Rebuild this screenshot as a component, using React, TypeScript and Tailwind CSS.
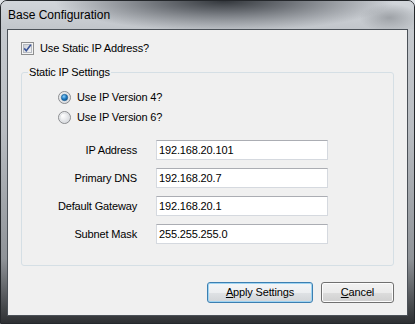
import React from "react";

function CheckBox() {
  return (
    <svg width="13" height="13" viewBox="0 0 13 13" className="shrink-0">
      <defs>
        <linearGradient id="cbg" x1="0" y1="0" x2="1" y2="1">
          <stop offset="0" stopColor="#cbcfd5" />
          <stop offset="1" stopColor="#f7f7f7" />
        </linearGradient>
      </defs>
      <rect x="0.5" y="0.5" width="12" height="12" fill="#f4f4f4" stroke="#8e8f8f" />
      <rect x="2.5" y="2.5" width="8" height="8" fill="url(#cbg)" stroke="#b5b9c0" />
      <path d="M3.2 6.4 L5.3 8.8 L9.8 2.8" fill="none" stroke="#3c5598" strokeWidth="1.6" />
    </svg>
  );
}

function Radio({ checked }: { checked?: boolean }) {
  return (
    <svg width="13" height="13" viewBox="0 0 13 13" className="shrink-0">
      <defs>
        <radialGradient id="rbg" cx="0.35" cy="0.35" r="0.8">
          <stop offset="0" stopColor="#ffffff" />
          <stop offset="1" stopColor="#d0d3d8" />
        </radialGradient>
        <radialGradient id="rdot" cx="0.4" cy="0.35" r="0.7">
          <stop offset="0" stopColor="#8fd1f8" />
          <stop offset="0.55" stopColor="#1e7bc4" />
          <stop offset="1" stopColor="#0b4f8a" />
        </radialGradient>
      </defs>
      <circle cx="6.5" cy="6.5" r="6" fill="url(#rbg)" stroke="#8a8c8f" />
      <circle cx="6.5" cy="6.5" r="4.5" fill="none" stroke="#dfe1e4" strokeWidth="1" />
      {checked && <circle cx="6.5" cy="6.5" r="3.2" fill="url(#rdot)" stroke="#1c5a8c" strokeWidth="0.6" />}
    </svg>
  );
}

function Field({ label, value }: { label: string; value: string }) {
  return (
    <div className="flex items-center h-[20px] gap-[19px]">
      <div className="w-[115px] text-right">{label}</div>
      <div className="w-[172px] h-[20px] border border-[#d5d9df] border-t-[#abadb3] bg-white flex items-center pl-[2px]">
        {value}
      </div>
    </div>
  );
}

export default function App() {
  return (
    <div className="w-[415px] h-[324px] bg-[#dfe3e8] font-['Liberation_Sans',Arial,sans-serif] text-black">
      <div className="w-[415px] h-[324px] flex flex-col rounded-t-[7px] border border-[#25282c] bg-[linear-gradient(to_bottom,#c9cdd2_0%,#b9bdc2_40%,#8f9398_80%,#2e3033_100%)]">
        <div className="h-[28px] flex items-center pl-[7px] text-[12px] rounded-t-[6px] bg-[radial-gradient(ellipse_170px_30px_at_54%_0%,#33373c_0%,#6f7379_40%,transparent_100%),radial-gradient(ellipse_30px_14px_at_94%_60%,#9ea2a7_0%,transparent_100%),linear-gradient(to_bottom,#d2d6db,#c2c6cb)]">
          Base Configuration
        </div>
        <div className="mx-[6px] mb-[7px] flex-1 border border-[#4b5158] bg-[#f0f0f0] flex flex-col pt-[12px] px-[13px] pb-[12px] text-[11px] tracking-[-0.15px]">
          <div className="flex items-center h-[13px] gap-[6px]">
            <CheckBox />
            <span>Use Static IP Address?</span>
          </div>
          <div className="relative mt-[17px] h-[194px] border border-[#d5dfe5] rounded-[3px] pt-[18px] pl-[36px]">
            <div className="absolute -top-[7px] left-[6px] px-[1px] bg-[#f0f0f0] leading-[13px]">Static IP Settings</div>
            <div className="flex flex-col gap-[7px]">
              <div className="flex items-center h-[13px] gap-[6px]">
                <Radio checked />
                <span>Use IP Version 4?</span>
              </div>
              <div className="flex items-center h-[13px] gap-[6px]">
                <Radio />
                <span>Use IP Version 6?</span>
              </div>
            </div>
            <div className="flex flex-col gap-[8px] mt-[16px] -ml-[36px]">
              <Field label="IP Address" value="192.168.20.101" />
              <Field label="Primary DNS" value="192.168.20.7" />
              <Field label="Default Gateway" value="192.168.20.1" />
              <Field label="Subnet Mask" value="255.255.255.0" />
            </div>
          </div>
          <div className="mt-auto flex justify-end gap-[8px]">
            <button className="w-[106px] h-[21px] rounded-[3px] border border-[#3c7fb1] bg-[linear-gradient(to_bottom,#f4f6f8_0%,#eceef0_50%,#dfe2e5_50%,#d2d5d8_100%)] shadow-[inset_0_0_0_1px_#9fd4f2] flex items-center justify-center">
              <span><span className="underline">A</span>pply Settings</span>
            </button>
            <button className="w-[73px] h-[21px] rounded-[3px] border border-[#707070] bg-[linear-gradient(to_bottom,#f2f2f2_0%,#ebebeb_50%,#dddddd_50%,#cfcfcf_100%)] shadow-[inset_0_0_0_1px_#fcfcfc] flex items-center justify-center">
              <span><span className="underline">C</span>ancel</span>
            </button>
          </div>
        </div>
      </div>
    </div>
  );
}
